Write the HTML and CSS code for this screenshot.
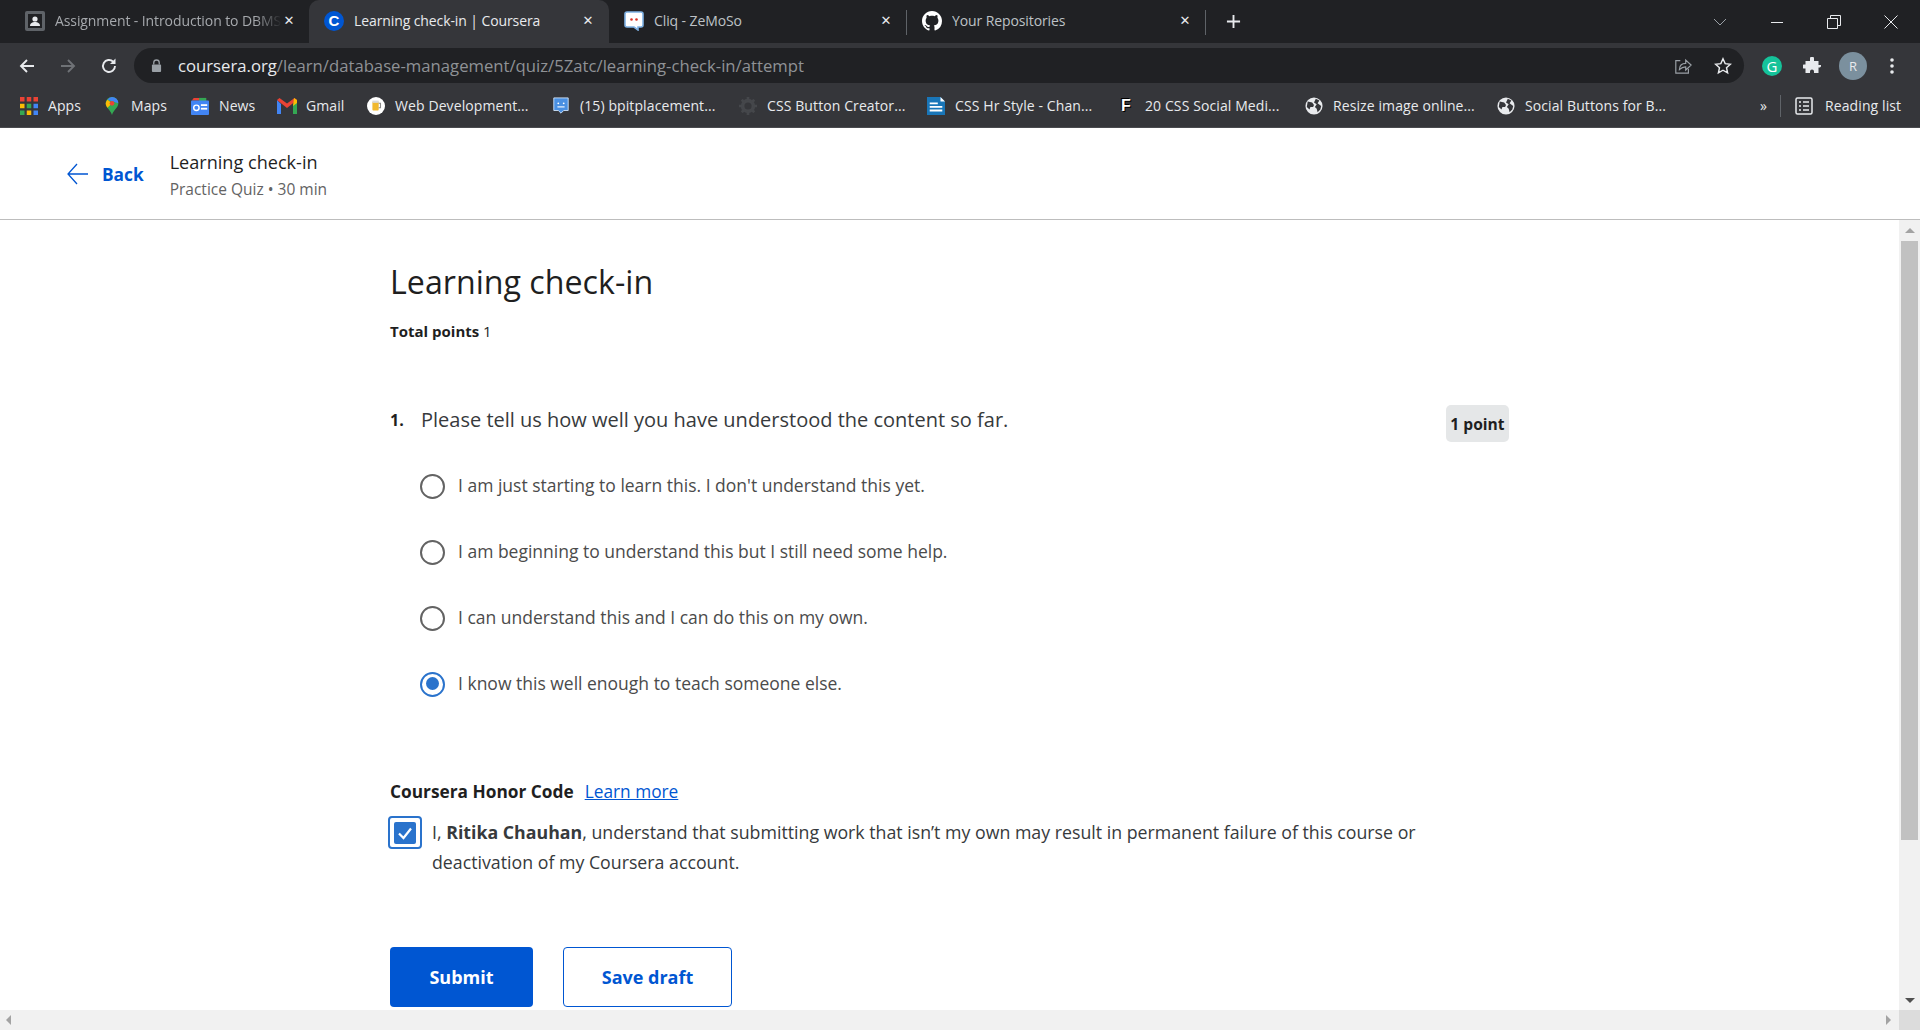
FILE: index.html
```html
<!DOCTYPE html>
<html lang="en">
<head>
    <meta charset="UTF-8">
    <title>Learning check-in | Coursera</title>
    <link rel="stylesheet" href="styles.css">
</head>
<body>
<div class="tabstrip">
    <div class="tab tab-first">
        <svg class="fav" viewBox="0 0 20 20"><rect x="0" y="0" width="20" height="20" rx="2" fill="#5f6368"/><rect x="3" y="3" width="14" height="14" fill="#202124"/><circle cx="10" cy="8" r="2.6" fill="#e8eaed"/><path d="M5 15c0-3 2.5-4 5-4s5 1 5 4z" fill="#e8eaed"/></svg>
        <span class="tab-title tab-title-fade">Assignment - Introduction to DBMS</span>
        <span class="tab-x">&#10005;</span>
    </div>
    <div class="tab tab-active">
        <span class="fav fav-coursera">C</span>
        <span class="tab-title">Learning check-in | Coursera</span>
        <span class="tab-x">&#10005;</span>
    </div>
    <div class="tab tab-sep">
        <svg class="fav" viewBox="0 0 20 20"><path d="M3 1h14a2 2 0 0 1 2 2v11a2 2 0 0 1-2 2h-3v3l-4-3H3a2 2 0 0 1-2-2V3a2 2 0 0 1 2-2z" fill="#fff" stroke="#7fb2e5" stroke-width="1.6"/><circle cx="7.5" cy="8.5" r="1.3" fill="#d93025"/><circle cx="12.5" cy="8.5" r="1.3" fill="#d93025"/></svg>
        <span class="tab-title">Cliq - ZeMoSo</span>
        <span class="tab-x">&#10005;</span>
    </div>
    <div class="tab tab-sep">
        <svg class="fav" viewBox="0 0 16 16"><path fill="#fff" d="M8 0C3.58 0 0 3.58 0 8c0 3.54 2.29 6.53 5.47 7.59.4.07.55-.17.55-.38 0-.19-.01-.82-.01-1.49-2.01.37-2.53-.49-2.69-.94-.09-.23-.48-.94-.82-1.13-.28-.15-.68-.52-.01-.53.63-.01 1.08.58 1.23.82.72 1.21 1.87.87 2.33.66.07-.52.28-.87.51-1.07-1.78-.2-3.64-.89-3.64-3.95 0-.87.31-1.59.82-2.15-.08-.2-.36-1.02.08-2.12 0 0 .67-.21 2.2.82.64-.18 1.32-.27 2-.27.68 0 1.36.09 2 .27 1.53-1.04 2.2-.82 2.2-.82.44 1.1.16 1.92.08 2.12.51.56.82 1.27.82 2.15 0 3.07-1.87 3.75-3.65 3.95.29.25.54.73.54 1.48 0 1.07-.01 1.93-.01 2.2 0 .21.15.46.55.38A8.013 8.013 0 0016 8c0-4.42-3.58-8-8-8z"/></svg>
        <span class="tab-title">Your Repositories</span>
        <span class="tab-x">&#10005;</span>
    </div>
    <svg class="new-tab" viewBox="0 0 16 16"><path d="M8 1v14M1 8h14" stroke="#e8eaed" stroke-width="2"/></svg>
    <div class="window-btns">
        <svg class="win-icon" viewBox="0 0 14 14"><path d="M1 4l6 6 6-6" fill="none" stroke="#9aa0a6"/></svg>
        <svg class="win-icon" viewBox="0 0 14 14"><path d="M1 7.5h12" stroke="#e8eaed"/></svg>
        <svg class="win-icon" viewBox="0 0 14 14"><path d="M.5 3.5h10v10H.5zM3.5 3.5V.5h10v10h-3" fill="none" stroke="#e8eaed"/></svg>
        <svg class="win-icon" viewBox="0 0 14 14"><path d="M.5.5l13 13M13.5.5l-13 13" stroke="#e8eaed"/></svg>
    </div>
</div>

<div class="toolbar">
    <svg class="nav-icon" viewBox="0 0 18 18"><path d="M16 9H3M9 3L3 9l6 6" fill="none" stroke="#e8eaed" stroke-width="1.9"/></svg>
    <svg class="nav-icon" viewBox="0 0 18 18"><path d="M2 9h13M9 3l6 6-6 6" fill="none" stroke="#6f7276" stroke-width="1.9"/></svg>
    <svg class="nav-icon" viewBox="0 0 18 18"><path d="M15 9a6 6 0 1 1-1.8-4.3" fill="none" stroke="#e8eaed" stroke-width="1.9"/><path d="M15.5 1.5v5.5H10z" fill="#e8eaed"/></svg>
    <div class="omnibox">
        <svg class="lock" viewBox="0 0 12 14"><path d="M3 6V4a3 3 0 0 1 6 0v2" fill="none" stroke="#9aa0a6" stroke-width="1.4"/><rect x="1" y="6" width="10" height="8" rx="1" fill="#9aa0a6"/></svg>
        <span class="url"><span class="url-host">coursera.org</span>/learn/database-management/quiz/5Zatc/learning-check-in/attempt</span>
        <svg class="omni-icon omni-share" viewBox="0 0 20 20"><path d="M7 4H2v14h14v-5" fill="none" stroke="#9aa0a6" stroke-width="1.3"/><path d="M6 14c0-5 3-7 7-7V3.500l6 5.500-6 5.500V11c-3 0-5 1-7 3z" fill="none" stroke="#9aa0a6" stroke-width="1.3"/></svg>
        <svg class="omni-icon" viewBox="0 0 20 20"><path d="M10 2l2.400 5.400 5.800.6-4.300 3.900 1.200 5.800L10 14.700l-5.100 3 1.200-5.800L1.800 8l5.800-.6z" fill="none" stroke="#e8eaed" stroke-width="1.600"/></svg>
    </div>
    <div class="ext-icons">
        <span class="ext-grammarly">G</span>
        <svg class="ext-puzzle" viewBox="0 0 18 18"><path d="M7 1.500a2 2 0 0 1 4 0V4h4.500v4H18v0a2 2 0 0 1-2.500 2.500V16H11v-1.500a2 2 0 0 0-4 0V16H2.500v-4.500H1a2 2 0 0 1 0-4h1.500V4H7z" fill="#e8eaed"/></svg>
        <span class="avatar">R</span>
        <svg class="ext-dots" viewBox="0 0 4 18"><circle cx="2" cy="3" r="1.800"/><circle cx="2" cy="9" r="1.800"/><circle cx="2" cy="15" r="1.800"/></svg>
    </div>
</div>

<div class="bookmarks">
    <div class="bm-list">
        <div class="bm"><svg class="bm-icon" viewBox="0 0 16 16"><g><rect x="0" y="0" width="4" height="4" fill="#ea4335"/><rect x="6" y="0" width="4" height="4" fill="#ea4335"/><rect x="12" y="0" width="4" height="4" fill="#ea4335"/><rect x="0" y="6" width="4" height="4" fill="#fbbc04"/><rect x="6" y="6" width="4" height="4" fill="#34a853"/><rect x="12" y="6" width="4" height="4" fill="#4285f4"/><rect x="0" y="12" width="4" height="4" fill="#34a853"/><rect x="6" y="12" width="4" height="4" fill="#fbbc04"/><rect x="12" y="12" width="4" height="4" fill="#4285f4"/></g></svg><span>Apps</span></div>
        <div class="bm"><svg class="bm-icon" viewBox="0 0 16 20"><path d="M8 0a7 7 0 0 1 7 7c0 5-5 7-7 13C6 14 1 12 1 7a7 7 0 0 1 7-7z" fill="#34a853"/><path d="M8 0a7 7 0 0 1 7 7L3 3a7 7 0 0 1 5-3z" fill="#4285f4"/><path d="M1 7a7 7 0 0 1 2-4l5 4-5 5c-1-1.500-2-3-2-5z" fill="#fbbc04"/><circle cx="8" cy="7" r="2.600" fill="#ea4335"/></svg><span>Maps</span></div>
        <div class="bm"><svg class="bm-icon" viewBox="0 0 20 20"><path d="M3 1h12l2 3H1z" fill="#ea4335"/><path d="M9 1h8v4H9z" fill="#34a853"/><rect x="0" y="4" width="20" height="16" rx="1" fill="#4285f4"/><rect x="11" y="8" width="7" height="2" fill="#fff"/><rect x="11" y="12" width="7" height="2" fill="#fff"/><circle cx="6" cy="12" r="3" fill="none" stroke="#fff" stroke-width="1.600"/></svg><span>News</span></div>
        <div class="bm"><svg class="bm-icon" viewBox="0 0 20 16"><path d="M0 2v14h4V6z" fill="#4285f4"/><path d="M20 2v14h-4V6z" fill="#34a853"/><path d="M0 2l10 8 10-8-2.500-2L10 5.500 2.500 0z" fill="#ea4335"/><path d="M17 0l3 2v3l-4 3z" fill="#fbbc04"/></svg><span>Gmail</span></div>
        <div class="bm"><svg class="bm-icon" viewBox="0 0 20 20"><circle cx="10" cy="10" r="10" fill="#fff"/><rect x="6" y="5" width="7" height="10" rx="1" fill="#f1b82d"/><path d="M13 7h2v5h-2" fill="none" stroke="#888" stroke-width="1.200"/><rect x="6" y="4" width="7" height="2.500" fill="#d8d8d8"/></svg><span>Web Development...</span></div>
        <div class="bm"><svg class="bm-icon" viewBox="0 0 18 20"><path d="M1 1h16v14h-5l-3 3-3-3H1z" fill="#4a90e2" stroke="#cfe2f8"/><circle cx="6" cy="7" r="1" fill="#fff"/><circle cx="12" cy="7" r="1" fill="#fff"/><path d="M5 11h8" stroke="#fff" stroke-width="1.200"/></svg><span>(15) bpitplacement...</span></div>
        <div class="bm"><svg class="bm-icon" viewBox="0 0 20 20"><circle cx="10" cy="10" r="6" fill="none" stroke="#45474b" stroke-width="4"/><path d="M10 0v4M10 16v4M0 10h4M16 10h4M3 3l3 3M14 14l3 3M17 3l-3 3M6 14l-3 3" stroke="#45474b" stroke-width="3"/></svg><span>CSS Button Creator...</span></div>
        <div class="bm"><svg class="bm-icon" viewBox="0 0 20 20"><path d="M0 0h15l5 5v15H0z" fill="#1976b8"/><path d="M15 0l5 5h-5z" fill="#fff"/><path d="M3 7h9M3 11h14M3 15h14" stroke="#fff" stroke-width="2"/></svg><span>CSS Hr Style - Chan...</span></div>
        <div class="bm"><span class="bm-f">F</span><span>20 CSS Social Medi...</span></div>
        <div class="bm"><svg class="bm-icon" viewBox="0 0 20 20"><circle cx="10" cy="10" r="9.500" fill="#e8eaed"/><path d="M3 5l5 1 2 3-1 2-3 0-1 3-3-3zM12 2l4 2-2 3 4 3-1 4-3 3-1-4-2-2 2-3-3-2z" fill="#35363a"/></svg><span>Resize image online...</span></div>
        <div class="bm"><svg class="bm-icon" viewBox="0 0 20 20"><circle cx="10" cy="10" r="9.500" fill="#e8eaed"/><path d="M3 5l5 1 2 3-1 2-3 0-1 3-3-3zM12 2l4 2-2 3 4 3-1 4-3 3-1-4-2-2 2-3-3-2z" fill="#35363a"/></svg><span>Social Buttons for B...</span></div>
    </div>
    <span class="bm-more">&raquo;</span>
    <span class="bm-divider"></span>
    <svg class="bm-reading" viewBox="0 0 18 18"><rect x="1" y="1" width="16" height="16" rx="1.500" fill="none" stroke="#e8eaed" stroke-width="1.500"/><path d="M4 5h2M8 5h6M4 9h2M8 9h6M4 13h2M8 13h6" stroke="#e8eaed" stroke-width="1.500"/></svg>
    <span class="bm-reading-label">Reading list</span>
</div>

<header class="course-header">
    <a class="back-link">
        <svg class="back-arrow" viewBox="0 0 22 22"><path d="M21 11H1M10 1L1 11l9 10" fill="none" stroke="#0056d2" stroke-width="1.300"/></svg>
        <span>Back</span>
    </a>
    <div class="course-info">
        <div class="course-title">Learning check-in</div>
        <div class="course-sub">Practice Quiz &bull; 30 min</div>
    </div>
</header>

<div class="viewport">
    <main class="quiz">
        <h1>Learning check-in</h1>
        <p class="total-points"><b>Total points</b> 1</p>

        <div class="question">
            <span class="question-num">1.</span>
            <span class="question-text">Please tell us how well you have understood the content so far.</span>
            <span class="point-badge">1 point</span>
        </div>

        <div class="options">
            <div class="option"><span class="radio"></span><span class="option-label">I am just starting to learn this. I don't understand this yet.</span></div>
            <div class="option"><span class="radio"></span><span class="option-label">I am beginning to understand this but I still need some help.</span></div>
            <div class="option"><span class="radio"></span><span class="option-label">I can understand this and I can do this on my own.</span></div>
            <div class="option"><span class="radio radio-on"></span><span class="option-label">I know this well enough to teach someone else.</span></div>
        </div>

        <div class="honor-head"><b>Coursera Honor Code</b><a class="learn-more">Learn more</a></div>
        <div class="honor-row">
            <span class="checkbox">
                <svg class="check-mark" viewBox="0 0 22 22"><rect width="22" height="22" rx="2" fill="#2a73cc"/><path d="M5 11.500l4.500 4.500L17 6.500" fill="none" stroke="#fff" stroke-width="2.200"/></svg>
            </span>
            <p class="honor-text">I, <b>Ritika Chauhan</b>, understand that submitting work that isn&rsquo;t my own may result in permanent failure of this course or deactivation of my Coursera account.</p>
        </div>

        <div class="actions">
            <button class="btn btn-primary">Submit</button>
            <button class="btn btn-secondary">Save draft</button>
        </div>
    </main>
    <div class="vscroll">
        <span class="arrow arrow-up"></span>
        <span class="vthumb"></span>
        <span class="arrow arrow-down"></span>
    </div>
</div>

<div class="hscroll">
    <span class="arrow arrow-left"></span>
    <span class="arrow arrow-right"></span>
    <span class="corner"></span>
</div>
</body>
</html>
```

FILE: styles.css
```css
* {
    box-sizing: border-box;
}

html, body {
    height: 1030px;
    margin: 0;
    overflow: hidden;
}

body {
    font-family: "Open Sans", "Liberation Sans", sans-serif;
    background-color: white;
    color: #1f1f1f;
}

b {
    font-weight: 700;
}

/* browser chrome */
.tabstrip {
    height: 43px;
    background-color: #202124;
    display: grid;
    grid-template-columns: 309px 300px 298px 299px auto 1fr;
    align-items: stretch;
    font-size: 14px;
    color: #bdc1c6;
}

.tab {
    display: flex;
    align-items: center;
    padding: 0 14px 2px 15px;
    position: relative;
}

.tab-first {
    padding-left: 25px;
    padding-right: 13px;
}

.tab-active {
    background-color: #35363a;
    color: #e8eaed;
    border-radius: 10px 10px 0 0;
}

.tab-sep::after {
    content: "";
    position: absolute;
    right: 0;
    top: 10px;
    height: 25px;
    width: 1px;
    background-color: #5f6368;
}

.fav {
    width: 20px;
    height: 20px;
    flex: none;
    margin-right: 10px;
}

.fav-coursera {
    background-color: #0056d2;
    border-radius: 50%;
    color: white;
    font-family: "Liberation Sans", sans-serif;
    font-weight: 700;
    font-size: 15px;
    line-height: 20px;
    text-align: center;
}

.tab-title {
    flex: 1;
    white-space: nowrap;
    overflow: hidden;
    letter-spacing: -0.1px;
}

.tab-title-fade {
    color: #a6a9ad;
    -webkit-mask-image: linear-gradient(to right, black 88%, transparent 100%);
    mask-image: linear-gradient(to right, black 88%, transparent 100%);
}

.tab-x {
    width: 14px;
    text-align: center;
    font-size: 13px;
    font-family: "DejaVu Sans", sans-serif;
    color: #e8eaed;
}

.new-tab {
    width: 15px;
    height: 15px;
    align-self: center;
    margin-left: 20px;
}

.window-btns {
    display: flex;
    align-items: center;
    justify-content: flex-end;
    gap: 43px;
    padding-right: 22px;
}

.win-icon {
    width: 14px;
    height: 14px;
}

.toolbar {
    height: 45px;
    background-color: #35363a;
    display: flex;
    align-items: flex-start;
    padding: 5px 0 0 18px;
}

.nav-icon {
    width: 18px;
    height: 18px;
    margin: 9px 23px 0 0;
}

.omnibox {
    width: 1610px;
    height: 35px;
    margin-left: -7px;
    background-color: #202124;
    border-radius: 18px;
    display: flex;
    align-items: center;
    padding: 0 12px 0 17px;
}

.lock {
    width: 11px;
    height: 13px;
    margin-right: 16px;
}

.url {
    flex: 1;
    font-size: 16.7px;
    color: #8f9296;
    white-space: nowrap;
}

.url-host {
    color: #e8eaed;
}

.omni-icon {
    width: 18px;
    height: 18px;
}

.omni-share {
    margin-right: 22px;
}

.ext-icons {
    display: flex;
    align-items: center;
    height: 35px;
    margin-left: 18px;
}

.ext-grammarly {
    width: 20px;
    height: 20px;
    border-radius: 50%;
    background-color: #15c39a;
    color: white;
    font: 400 15px/20px "Open Sans", sans-serif;
    text-align: center;
}

.ext-puzzle {
    width: 18px;
    height: 18px;
    margin-left: 21px;
}

.avatar {
    width: 28px;
    height: 28px;
    margin-left: 18px;
    border-radius: 50%;
    background-color: #7b909e;
    color: #e8eaed;
    font: 13px/28px "Open Sans", sans-serif;
    text-align: center;
}

.ext-dots {
    width: 4px;
    height: 18px;
    margin-left: 23px;
    fill: #e8eaed;
}

.bookmarks {
    height: 40px;
    background-color: #35363a;
    display: flex;
    align-items: center;
    padding: 0 0 4px 19px;
    font-size: 14px;
    letter-spacing: 0.1px;
    color: #e8eaed;
    border-bottom: 1px solid #4a4b4f;
    white-space: nowrap;
}

.bm-list {
    display: grid;
    grid-template-columns: 83px 88px 87px 89px 185px 187px 188px 190px 188px 192px 200px;
    width: 1677px;
}

.bm {
    display: flex;
    align-items: center;
    gap: 9px;
}

.bm-icon {
    width: 20px;
    height: 18px;
    flex: none;
}

.bm-f {
    width: 20px;
    height: 18px;
    color: white;
    font: 700 16px/18px "Liberation Sans", sans-serif;
    text-align: center;
    text-shadow: 1px 1px 0 #000, -1px -1px 0 #000;
}

.bm-more {
    margin-left: 64px;
    font-size: 14px;
    width: 12px;
}

.bm-divider {
    width: 1px;
    height: 22px;
    margin-left: 8px;
    background-color: #5f6368;
}

.bm-reading {
    width: 18px;
    height: 18px;
    margin-left: 14px;
}

.bm-reading-label {
    margin-left: 12px;
}

/* course header */
.course-header {
    height: 92px;
    background-color: white;
    border-bottom: 1px solid #bdbdbd;
    display: flex;
    align-items: flex-start;
    padding: 21px 0 0 67px;
}

.back-link {
    display: flex;
    align-items: center;
    gap: 13px;
    height: 50px;
    color: #0056d2;
    font-size: 17.3px;
    font-weight: 700;
}

.back-arrow {
    width: 22px;
    height: 22px;
}

.course-info {
    margin-left: 26px;
}

.course-title {
    font-size: 18.1px;
    line-height: 26px;
    color: #1f1f1f;
}

.course-sub {
    font-size: 15.5px;
    line-height: 28px;
    color: #636363;
}

/* quiz */
.viewport {
    height: 790px;
    display: flex;
    overflow: hidden;
}

.quiz {
    width: 1899px;
    padding: 40px 0 0 390px;
}

h1 {
    margin: 0;
    font-size: 32.2px;
    line-height: 44px;
    font-weight: 500;
    color: #1f1f1f;
}

.total-points {
    margin: 17px 0 0;
    font-size: 15px;
    line-height: 20px;
}

.question {
    display: flex;
    align-items: flex-start;
    width: 1119px;
    margin-top: 64px;
}

.question-num {
    width: 31px;
    font-size: 16px;
    font-weight: 700;
    line-height: 30px;
}

.question-text {
    flex: 1;
    font-size: 20px;
    line-height: 30px;
    color: #373a3c;
}

.point-badge {
    width: 63px;
    height: 37px;
    background-color: #e5e7e8;
    border-radius: 5px;
    font-size: 15.6px;
    font-weight: 700;
    line-height: 39px;
    text-align: center;
}

.options {
    margin-top: 11px;
    padding-left: 30px;
}

.option {
    height: 66px;
    display: flex;
    align-items: center;
    gap: 13px;
    font-size: 17.5px;
    color: #4b4b4b;
}

.option-label {
    padding-bottom: 2px;
}

.radio {
    width: 25px;
    height: 25px;
    flex: none;
    border: 2.5px solid #636363;
    border-radius: 50%;
}

.radio-on {
    border-color: #2a73cc;
    position: relative;
}

.radio-on::after {
    content: "";
    position: absolute;
    left: 3.500px;
    top: 3.500px;
    width: 13px;
    height: 13px;
    border-radius: 50%;
    background-color: #2a73cc;
}

.honor-head {
    margin-top: 63px;
    display: flex;
    gap: 11px;
    font-size: 17.3px;
    line-height: 24px;
}

.learn-more {
    color: #0056d2;
    text-decoration: underline;
}

.honor-row {
    display: flex;
    align-items: flex-start;
    margin: 12px 0 0 -2px;
}

.checkbox {
    width: 34px;
    height: 33px;
    flex: none;
    border: 2px solid #2a73cc;
    border-radius: 4px;
    padding: 4px 0 0 4px;
}

.check-mark {
    display: block;
    width: 22px;
    height: 22px;
}

.honor-text {
    width: 990px;
    margin: 1px 0 0 10px;
    font-size: 17.75px;
    line-height: 30px;
    color: #373a3c;
}

.actions {
    display: flex;
    gap: 30px;
    margin-top: 70px;
}

.btn {
    height: 60px;
    border-radius: 4px;
    font-family: inherit;
    font-size: 18px;
    font-weight: 700;
    padding: 0;
}

.btn-primary {
    width: 143px;
    background-color: #0056d2;
    border: none;
    color: white;
}

.btn-secondary {
    width: 169px;
    background-color: white;
    border: 1px solid #0056d2;
    color: #0056d2;
}

/* scrollbars */
.vscroll {
    width: 21px;
    background-color: #f1f1f1;
    display: flex;
    flex-direction: column;
    align-items: center;
    padding-top: 8px;
}

.vthumb {
    width: 17px;
    height: 599px;
    margin-top: 8px;
    background-color: #c1c1c1;
}

.arrow {
    width: 0;
    height: 0;
    flex: none;
    border: 5px solid transparent;
}

.arrow-up {
    border-top: none;
    border-bottom-color: #a3a3a3;
}

.arrow-down {
    margin-top: auto;
    margin-bottom: 7px;
    border-bottom: none;
    border-top-color: #505050;
}

.hscroll {
    height: 20px;
    background-color: #f1f1f1;
    display: flex;
    align-items: center;
    padding-left: 6px;
}

.arrow-left {
    border-left: none;
    border-right-color: #a3a3a3;
}

.arrow-right {
    margin-left: auto;
    margin-right: 8px;
    border-right: none;
    border-left-color: #a3a3a3;
}

.corner {
    width: 21px;
    height: 20px;
    background-color: #dcdcdc;
}
```
